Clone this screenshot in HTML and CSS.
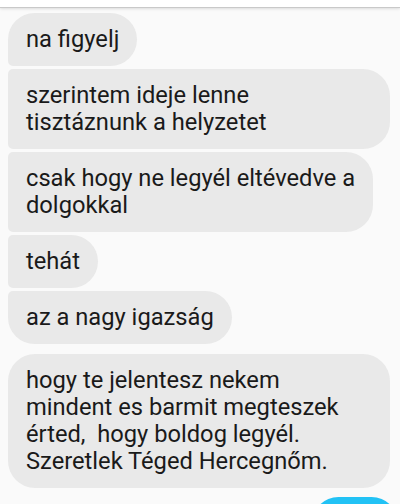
FILE: index.html
```html
<!DOCTYPE html>
<html lang="hu">
<head>
<meta charset="utf-8">
<link rel="stylesheet" href="styles.css">
</head>
<body>
<div class="topbar"></div>
<div class="thread">
  <div class="group">
    <div class="bubble first">na figyelj</div>
    <div class="bubble wide">szerintem ideje lenne<br>tisztáznunk a helyzetet</div>
    <div class="bubble">csak hogy ne legyél eltévedve a<br>dolgokkal</div>
    <div class="bubble">tehát</div>
    <div class="bubble last">az a nagy igazság</div>
  </div>
  <div class="group">
    <div class="bubble single wide">hogy te jelentesz nekem<br>mindent es barmit megteszek<br>érted,&nbsp; hogy boldog legyél.<br>Szeretlek Téged Hercegnőm.</div>
  </div>
  <div class="group mine">
    <div class="bubble blue">&nbsp;</div>
  </div>
</div>
</body>
</html>
```
FILE: styles.css
```css
html, body {
  margin: 0;
  padding: 0;
  background: #fafafa;
  height: 504px;
  overflow: hidden;
}
body {
  font-family: Roboto, "Noto Sans", sans-serif;
  color: #1a1a1a;
}
.topbar {
  height: 7px;
  background: #ffffff;
  border-bottom: 1px solid #c9c9c9;
  box-shadow: 0 1px 3px rgba(0,0,0,0.12);
}
.thread {
  padding: 5px 0 0 8px;
  display: flex;
  flex-direction: column;
  gap: 10px;
  overflow: hidden;
}
.group {
  display: flex;
  flex-direction: column;
  align-items: flex-start;
  gap: 3px;
}
.group.mine {
  align-items: flex-end;
  margin-top: -1px;
  padding-right: 2px;
}
.bubble {
  background: #e9e9e9;
  font-size: 23.7px;
  line-height: 27px;
  padding: 13px 18px;
  border-radius: 5px 27px 27px 5px;
  box-sizing: border-box;
  max-width: 382px;
  white-space: nowrap;
}
.bubble.first {
  border-radius: 27px 27px 27px 5px;
}
.bubble.last {
  border-radius: 5px 27px 27px 27px;
}
.bubble.single {
  border-radius: 27px;
}
.bubble.wide {
  width: 382px;
}
.bubble.blue {
  background: #22c2f5;
  width: 86px;
  border-radius: 27px;
}
```
